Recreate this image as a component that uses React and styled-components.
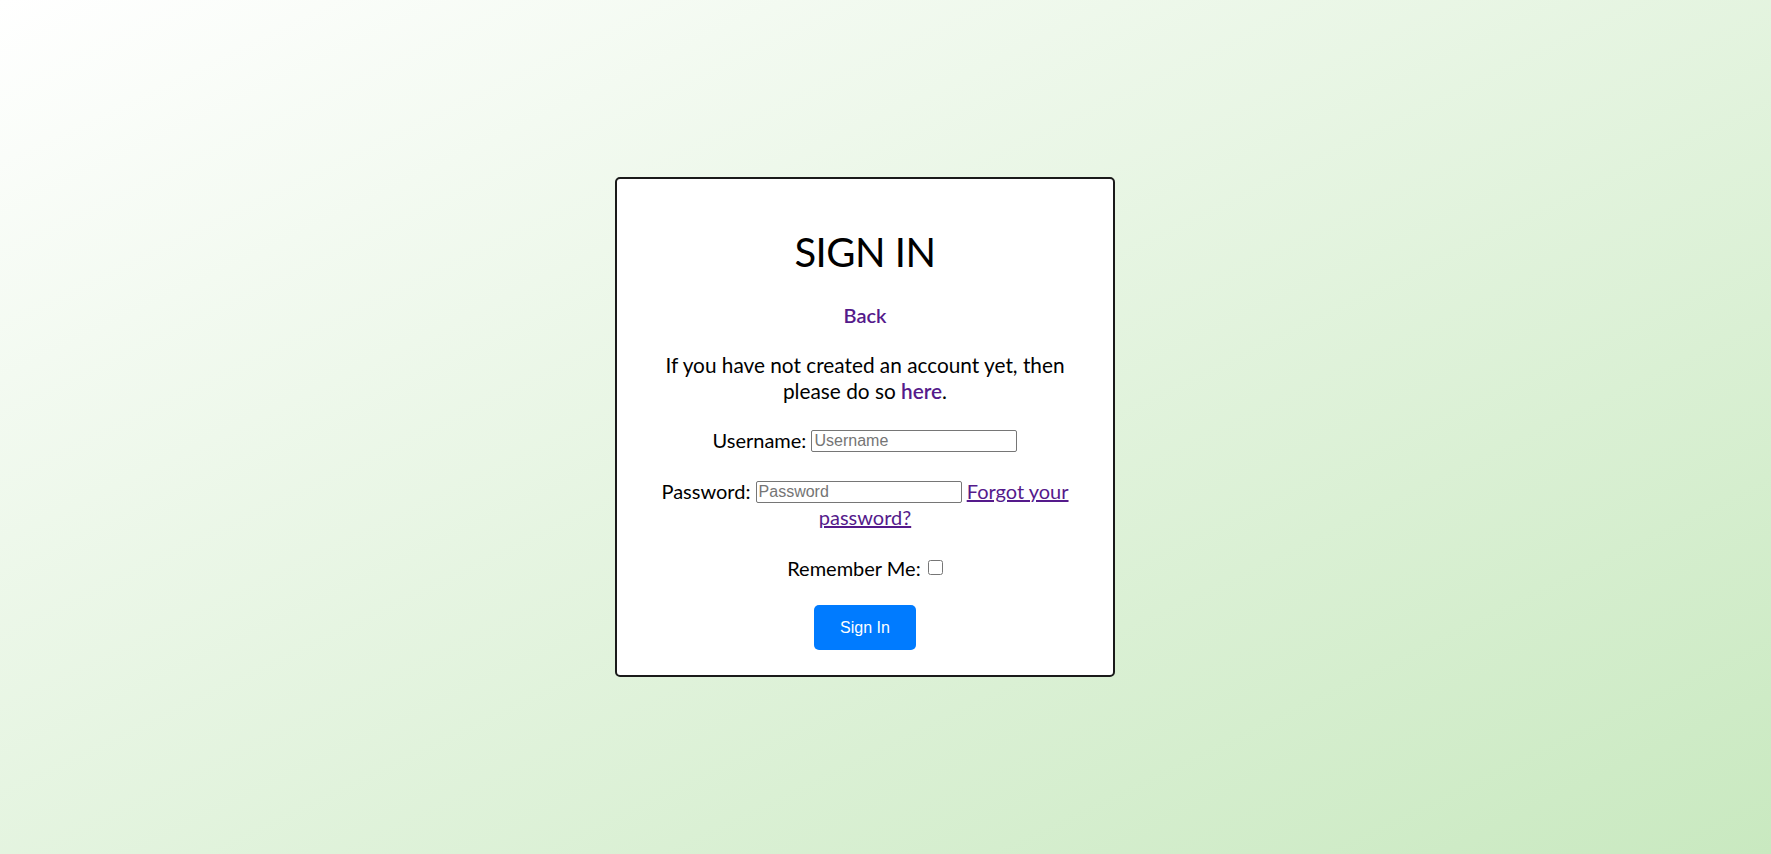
import React from "react";
import styled, { createGlobalStyle } from "styled-components";

const GlobalStyle = createGlobalStyle`
  html, body {
    margin: 0;
    padding: 0;
  }
  body {
    font-family: Lato, "Open Sans", sans-serif;
    color: #000;
  }
`;

const Page = styled.div`
  min-height: 100vh;
  box-sizing: border-box;
  padding-right: 41px;
  display: flex;
  align-items: center;
  justify-content: center;
  background: linear-gradient(to bottom right, #ffffff 0%, #c9e9c0 100%);
`;

const Card = styled.div`
  width: 500px;
  height: 500px;
  box-sizing: border-box;
  background: #fff;
  border: 2px solid #1a1a1a;
  border-radius: 5px;
  padding: 51px 40px 25px;
  display: flex;
  flex-direction: column;
  align-items: center;
  text-align: center;
`;

const Title = styled.h1`
  margin: 0;
  font-size: 40px;
  line-height: 44px;
  font-weight: 400;
  letter-spacing: -0.5px;
`;

const Row = styled.div`
  margin-top: ${(p) => p.gap || 24}px;
  font-size: ${(p) => p.size || 20}px;
  line-height: 26px;
`;

const StrongLink = styled.a`
  color: #551a8b;
  font-weight: 600;
  text-decoration: none;
  cursor: pointer;
`;

const PlainLink = styled.a`
  color: #551a8b;
  text-decoration: underline;
  cursor: pointer;
`;

const TextInput = styled.input`
  width: 206px;
  height: 22px;
  box-sizing: border-box;
  padding: 1px 2px;
  border: 1px solid #767676;
  border-radius: 2px;
  font-family: Arial, "Liberation Sans", sans-serif;
  font-size: 16px;
  vertical-align: 2px;

  &::placeholder {
    color: #757575;
  }
`;

const Check = styled.input`
  width: 15px;
  height: 15px;
  margin: 0 0 0 2px;
  vertical-align: 1px;
`;

const Button = styled.button`
  margin-top: 24px;
  background: #007bff;
  color: #fff;
  border: none;
  border-radius: 5px;
  padding: 13px 26px;
  font-family: Arial, "Liberation Sans", sans-serif;
  font-size: 16px;
  line-height: 19px;
  cursor: pointer;
`;

export default function App() {
  return (
    <>
      <GlobalStyle />
      <Page>
        <Card>
          <Title>SIGN IN</Title>
          <Row gap={28}>
            <StrongLink>Back</StrongLink>
          </Row>
          <Row gap={24} size={20.8}>
            If you have not created an account yet, then please do so{" "}
            <StrongLink>here</StrongLink>.
          </Row>
          <Row gap={23}>
            Username: <TextInput type="text" placeholder="Username" />
          </Row>
          <Row gap={25}>
            Password: <TextInput type="password" placeholder="Password" />{" "}
            <PlainLink>Forgot your password?</PlainLink>
          </Row>
          <Row gap={25}>
            Remember Me: <Check type="checkbox" />
          </Row>
          <Button>Sign In</Button>
        </Card>
      </Page>
    </>
  );
}
